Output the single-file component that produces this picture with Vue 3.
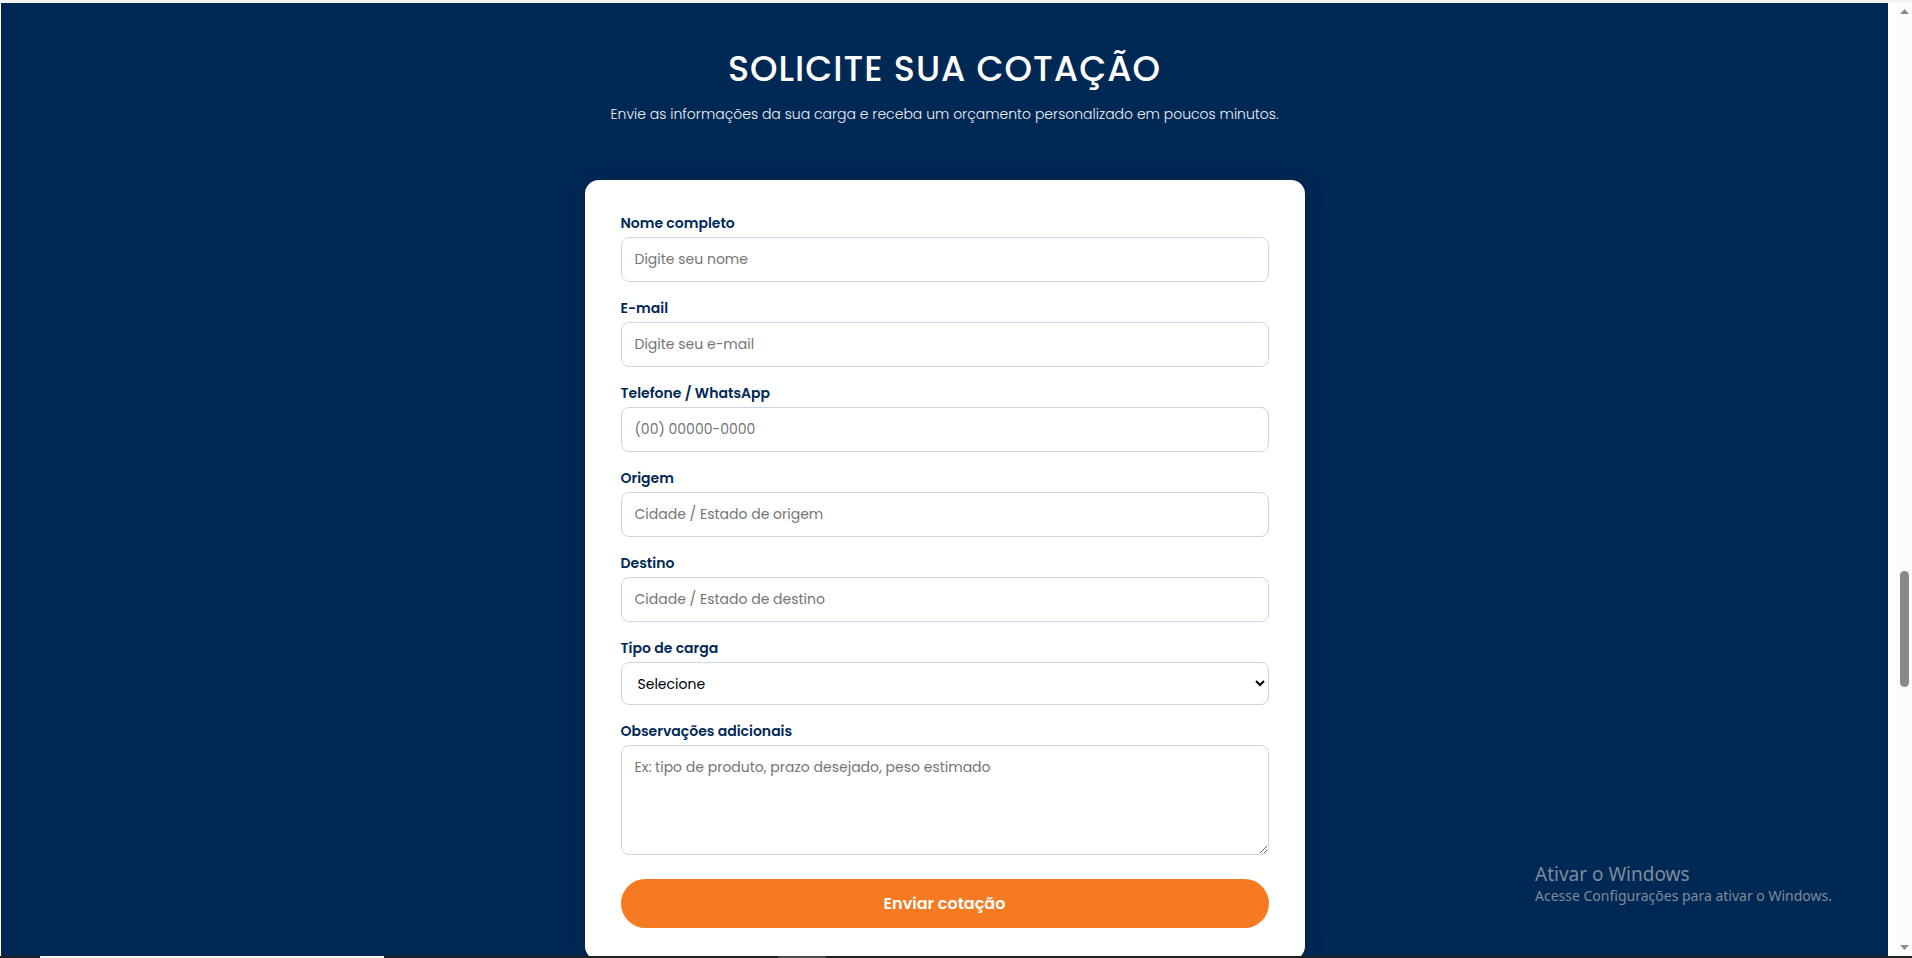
<script setup>
import { ref } from 'vue'

const fields = [
  { id: 'nome', label: 'Nome completo', type: 'text', placeholder: 'Digite seu nome' },
  { id: 'email', label: 'E-mail', type: 'email', placeholder: 'Digite seu e-mail' },
  { id: 'telefone', label: 'Telefone / WhatsApp', type: 'tel', placeholder: '(00) 00000-0000' },
  { id: 'origem', label: 'Origem', type: 'text', placeholder: 'Cidade / Estado de origem' },
  { id: 'destino', label: 'Destino', type: 'text', placeholder: 'Cidade / Estado de destino' }
]
const form = ref({ nome: '', email: '', telefone: '', origem: '', destino: '', carga: '', obs: '' })
</script>

<template>
  <div class="screen">
    <div class="viewport">
      <main class="quote">
        <h1>SOLICITE SUA COTAÇÃO</h1>
        <p class="lead">Envie as informações da sua carga e receba um orçamento personalizado em poucos minutos.</p>
        <form class="card" @submit.prevent>
          <div v-for="f in fields" :key="f.id" class="field">
            <label :for="f.id">{{ f.label }}</label>
            <input :id="f.id" v-model="form[f.id]" :type="f.type" :placeholder="f.placeholder">
          </div>
          <div class="field">
            <label for="carga">Tipo de carga</label>
            <select id="carga" v-model="form.carga">
              <option value="">Selecione</option>
            </select>
          </div>
          <div class="field">
            <label for="obs">Observações adicionais</label>
            <textarea id="obs" v-model="form.obs" placeholder="Ex: tipo de produto, prazo desejado, peso estimado"></textarea>
          </div>
          <button type="submit">Enviar cotação</button>
        </form>
      </main>
      <div class="scrollbar" aria-hidden="true">
        <div class="track">
          <svg width="9" height="5" viewBox="0 0 9 5"><path d="M4.5 0 9 5H0z" /></svg>
          <div class="rail"><div class="thumb"></div></div>
          <svg width="9" height="5" viewBox="0 0 9 5"><path d="M0 0h9L4.5 5z" /></svg>
        </div>
      </div>
    </div>
    <div class="taskbar"><span class="search"></span><span class="app"></span></div>
    <aside class="watermark">
      <strong>Ativar o Windows</strong>
      <span>Acesse Configurações para ativar o Windows.</span>
    </aside>
  </div>
</template>

<style>
body {
  margin: 0;
  overflow: hidden;
}
</style>

<style scoped>
.screen {
  position: relative;
  display: flex;
  flex-direction: column;
  height: 100vh;
  overflow: hidden;
  font-family: Poppins, Inter, "Open Sans", sans-serif;
}
.viewport {
  flex: 1;
  min-height: 0;
  display: flex;
  overflow: hidden;
  border-top: 3px solid #f4f4ee;
  border-left: 1px solid #fff;
}
.quote {
  flex: 1;
  display: flex;
  flex-direction: column;
  align-items: center;
  padding-top: 40px;
  background: #002855;
  color: #fff;
}
h1 {
  margin: 0;
  font-size: 35px;
  line-height: 52px;
  font-weight: 500;
  letter-spacing: 1px;
}
.lead {
  margin: 6px 0 53px;
  font-size: 14px;
  line-height: 26px;
  font-weight: 300;
  color: #eef2f6;
}
.card {
  box-sizing: border-box;
  flex: none;
  width: 100%;
  max-width: 720px;
  padding: 33px 36px 32px;
  display: flex;
  flex-direction: column;
  gap: 16px;
  border-radius: 14px;
  background: #fff;
  box-shadow: 0 4px 20px rgba(0, 0, 0, 0.15);
}
.field {
  display: flex;
  flex-direction: column;
  gap: 4px;
}
label {
  font-size: 14px;
  line-height: 20px;
  font-weight: 600;
  color: #002855;
}
input,
select,
textarea {
  box-sizing: border-box;
  width: 100%;
  height: 45px;
  padding: 0 13px;
  border: 1px solid #cdd6e4;
  border-radius: 8px;
  background: #fff;
  color: #000;
  font-family: inherit;
  font-size: 14px;
  font-weight: 400;
}
::placeholder {
  color: #757575;
  opacity: 1;
}
select {
  height: 43px;
  padding: 0 0 0 12px;
}
textarea {
  display: block;
  height: 110px;
  padding: 11px 13px;
  line-height: 21px;
  resize: vertical;
}
button {
  height: 49px;
  margin-top: 8px;
  border: 0;
  border-radius: 30px;
  background: #f67a21;
  color: #fff;
  font-family: inherit;
  font-size: 16px;
  font-weight: 600;
}
.scrollbar {
  width: 24px;
  display: flex;
  justify-content: flex-end;
  background: #fff;
}
.track {
  width: 15px;
  box-sizing: border-box;
  padding: 6px 0;
  display: flex;
  flex-direction: column;
  align-items: center;
  background: #fcfcfc;
}
.track svg {
  fill: #8a8a8a;
}
.rail {
  flex: 1;
  display: grid;
  grid-template-rows: 557fr 116fr 258fr;
}
.thumb {
  grid-row: 2;
  width: 9px;
  border-radius: 5px;
  background: #8a8a8a;
}
.taskbar {
  flex: none;
  height: 2px;
  display: flex;
  background: #1c2225;
}
.search {
  width: 18%;
  margin-left: 40px;
  background: #f5f3f3;
}
.app {
  width: 48px;
  margin-left: 394px;
  background: #4b4b4f;
}
.watermark {
  position: absolute;
  right: 80px;
  bottom: 52px;
  display: flex;
  flex-direction: column;
  font-family: "Segoe UI", "Noto Sans", sans-serif;
  color: #7e8c9b;
}
.watermark strong {
  font-size: 19px;
  line-height: 24px;
  font-weight: 400;
}
.watermark span {
  font-size: 14px;
  line-height: 20px;
}
</style>
